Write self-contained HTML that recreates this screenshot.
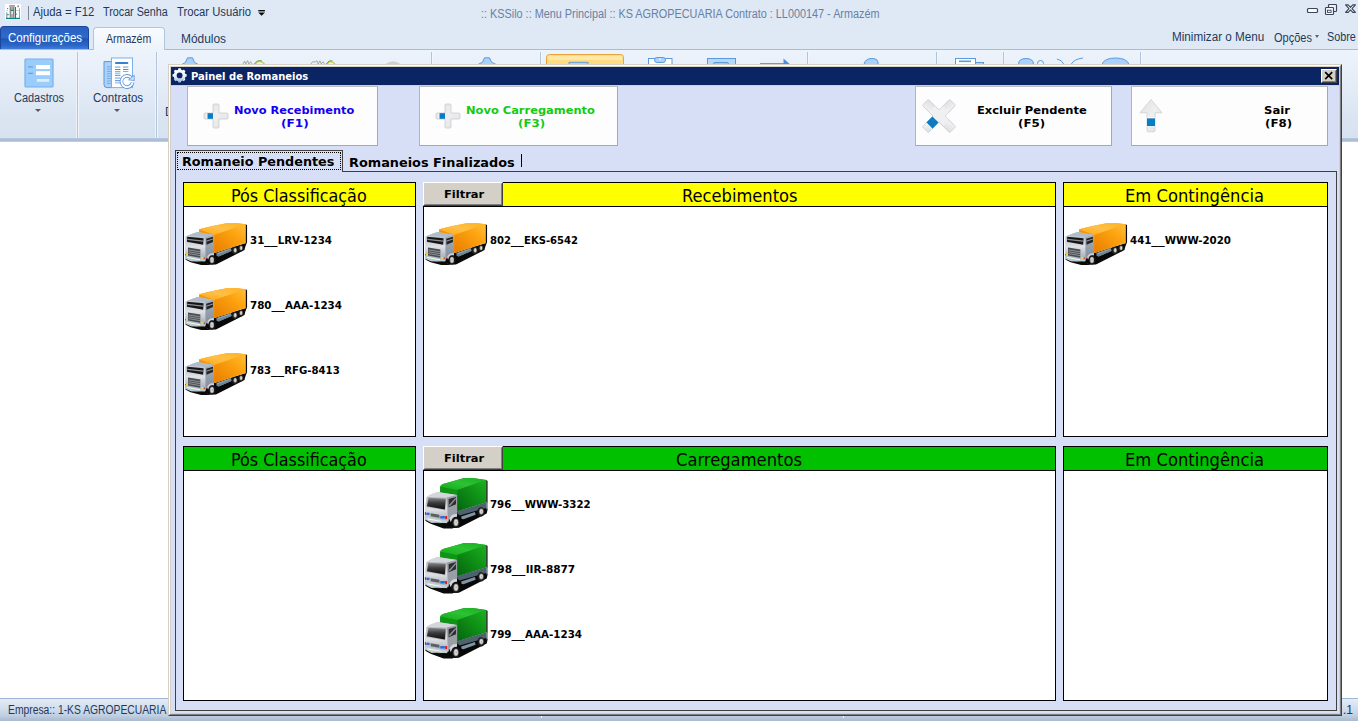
<!DOCTYPE html>
<html lang="pt-BR">
<head>
<meta charset="utf-8">
<title>KSSilo - Painel de Romaneios</title>
<style>
*{box-sizing:border-box;margin:0;padding:0}
html,body{width:1358px;height:721px;overflow:hidden;background:#fff}
body{position:relative;font-family:"Liberation Sans",sans-serif;font-size:12px;color:#1e395b}
.abs{position:absolute}
.t{position:absolute;white-space:nowrap;transform-origin:0 50%;line-height:1}
/* ---------- app frame ---------- */
#titlebar{left:0;top:0;width:1358px;height:50px;background:#dfe9f5}
.seg{font-family:"Liberation Sans",sans-serif;font-size:12px;color:#1e395b}
#tabconf{left:0;top:26px;width:89px;height:24px;border-radius:4px 4px 0 0;border:1px solid #1a479c;border-bottom:none;
 background:linear-gradient(#2a5fbd 0%,#2f6acb 45%,#1f55b6 52%,#2b66c6 80%,#4684e0 100%)}
#tabarm{left:93px;top:27px;width:72px;height:23px;background:linear-gradient(#f9fbfe,#edf3fb);border:1px solid #b3c5dc;border-bottom:none;border-radius:4px 4px 0 0}
#ribbon{left:0;top:49px;width:1358px;height:89px;border-top:1px solid #a8bcd6;background:linear-gradient(#edf3fb 0%,#e6eef8 30%,#dbe5f2 75%,#d7e2f0 100%)}
#ribbon2{left:94px;top:49px;width:70px;height:1px;background:#edf3fb}
#ribbonedge{left:0;top:138px;width:1358px;height:4px;background:linear-gradient(#bccce1,#a6bad5 50%,#b7c7dd 85%,#dfe6f0)}
.rsep{top:52px;width:3px;height:86px;margin-left:-1px;border-left:1px solid #eef3fb;border-right:1px solid #f2f6fc;background:#b2c4dc}
.darr{width:0;height:0;border-left:3px solid transparent;border-right:3px solid transparent;border-top:3px solid #5a5a5a}
#status{left:0;top:698px;width:1358px;height:23px;background:linear-gradient(#e3ecf7 0%,#d3dfee 40%,#c0cfe2 75%,#a9b9cf 100%);border-top:1px solid #9fb6d6}
/* ---------- dialog ---------- */
#dlg{left:168px;top:64px;width:1174px;height:652px;background:#d7dff6;
 border:1px solid;border-color:#d4d0c8 #404040 #404040 #d4d0c8}
#dlg .in1{left:0;top:0;right:0;bottom:0;border:1px solid;border-color:#fff #808080 #808080 #fff}
#dlg .in2{left:1px;top:1px;right:1px;bottom:1px;border:1px solid #d4d0c8}
#dtitle{left:171px;top:67px;width:1168px;height:18px;background:#0a2464}
#dtline{left:171px;top:85px;width:1168px;height:1px;background:#d4d0c8}
.ver{font-family:"DejaVu Sans","Liberation Sans",sans-serif;font-weight:bold}
.tah{font-family:"DejaVu Sans Condensed","Liberation Sans",sans-serif}
#dclose{left:1321px;top:69px;width:16px;height:14px;background:#d4d0c8;border:1px solid;border-color:#fff #404040 #404040 #fff}
#dclose i{position:absolute;left:0;top:0;right:0;bottom:0;border:1px solid;border-color:#d4d0c8 #808080 #808080 #d4d0c8}
.bigbtn{top:86px;height:60px;background:#fdfdfd;border:1px solid #a8a8a8;border-top-color:#bdbdbd;border-left-color:#b4b4b4}
.btxt{font-size:11px;color:#000}
.vtab{font-size:13px;color:#000}
.hdr{height:25px;border:1px solid #000}
.htx{font-size:18px;color:#000}
.yel{background:#ffff00}.grn{background:#00c000}
.pbody{background:#fff;border:1px solid #000;height:231px}
.filt{width:80px;height:24px;background:#d4d0c8;border:1px solid;border-color:#fff #404040 #404040 #fff}
.filt i{position:absolute;left:0;top:0;right:0;bottom:0;border:1px solid;border-color:#d4d0c8 #808080 #808080 #d4d0c8}
.us{display:inline-block;transform:scaleX(1.3);margin:0 1.5px}
.item{font-weight:bold;font-size:11px;color:#000}
#tabpage{left:175px;top:171px;width:1162px;height:540px;border:1px solid #404040;border-top:none}
</style>
</head>
<body>
<!-- ================= app title bar + ribbon ================= -->
<div id="titlebar" class="abs"></div>
<div id="apptitle" class="t seg" style="left:481px;top:8px;color:#6a7fa3;transform:scaleX(0.904)">:: KSSilo :: Menu Principal :: KS AGROPECUARIA Contrato : LL000147 - Armazém</div>
<div class="abs" style="left:28px;top:6px;width:1px;height:14px;background:#7f8794"></div>
<div id="t_ajuda" class="t seg" style="left:33px;top:6px;transform:scaleX(0.942)">Ajuda = F12</div>
<div id="t_senha" class="t seg" style="left:103px;top:6px;transform:scaleX(0.897)">Trocar Senha</div>
<div id="t_usuario" class="t seg" style="left:177px;top:6px;transform:scaleX(0.938)">Trocar Usuário</div>
<div id="tabconf" class="abs"></div>
<div id="t_conf" class="t seg" style="left:7.5px;top:32px;color:#fff;transform:scaleX(0.957)">Configurações</div>
<div id="ribbon" class="abs"></div>
<div id="tabarm" class="abs"></div>
<div id="ribbon2" class="abs"></div>
<div id="t_arm" class="t seg" style="left:106px;top:33px;transform:scaleX(0.882)">Armazém</div>
<div id="t_mod" class="t seg" style="left:181px;top:33px;transform:scaleX(0.994)">Módulos</div>
<div id="t_min" class="t seg" style="left:1172.4px;top:31px;transform:scaleX(0.975)">Minimizar o Menu</div>
<div id="t_opc" class="t seg" style="left:1273.7px;top:32px;transform:scaleX(0.916)">Opções</div>
<div class="abs darr" style="left:1315px;top:35px;border-left-width:2.5px;border-right-width:2.5px;border-top-color:#586479"></div>
<div id="t_sobre" class="t seg" style="left:1326.6px;top:31px;transform:scaleX(0.899)">Sobre</div>
<div id="ribbonedge" class="abs"></div>
<div class="abs rsep" style="left:77px"></div>
<div class="abs rsep" style="left:156px"></div>
<div class="abs rsep" style="left:431px"></div>
<div class="abs rsep" style="left:540px"></div>
<div class="abs rsep" style="left:807px"></div>
<div class="abs rsep" style="left:936px"></div>
<div class="abs rsep" style="left:1003px"></div>
<div class="abs rsep" style="left:1140px"></div>
<div id="t_cad" class="t seg" style="left:13.5px;top:92px;transform:scaleX(0.914)">Cadastros</div>
<div class="abs darr" style="left:35px;top:109px"></div>
<div id="t_con" class="t seg" style="left:92.5px;top:92px;transform:scaleX(0.963)">Contratos</div>
<div class="abs darr" style="left:114px;top:109px"></div>
<div class="abs seg" style="left:165px;top:106px;width:4px;height:12px;overflow:hidden;line-height:12px">D</div>
<!--RIBBONICONS-->
<!-- app icon -->
<svg class="abs" style="left:5px;top:4px" width="16" height="16" viewBox="0 0 16 16">
 <rect width="16" height="16" fill="#fff"/>
 <rect x="4.4" y="2" width="5.4" height="12.2" fill="#b9b6b6"/><rect x="4.2" y="1.2" width="5.8" height="1" fill="#8a8a8a"/>
 <rect x="5.3" y="3" width="0.9" height="10" fill="#7a7a7a"/><rect x="7.9" y="3" width="0.9" height="10" fill="#7a7a7a"/>
 <rect x="6.5" y="7" width="1.2" height="3.2" fill="#fff"/>
 <rect x="5.9" y="5.8" width="2.8" height="1.1" fill="#00857f"/>
 <rect x="10" y="3" width="1" height="11" fill="#00857f"/><rect x="11" y="9.6" width="0.9" height="1" fill="#00857f"/>
 <rect x="1.4" y="8.4" width="0.9" height="5.8" fill="#777"/><rect x="2.2" y="10.2" width="1.6" height="1" fill="#00857f"/>
 <rect x="2" y="4.2" width="1.2" height="0.9" fill="#00857f"/><rect x="1.6" y="6" width="0.8" height="0.8" fill="#777"/>
 <rect x="12.4" y="1.4" width="1.6" height="1.8" fill="#8a8a8a"/><rect x="14" y="4.2" width="0.9" height="10" fill="#999"/>
 <rect x="11.2" y="6.2" width="3.4" height="0.7" fill="#bbb"/>
 <rect x="1" y="13.8" width="14" height="1.3" fill="#00857f"/>
</svg>
<!-- QAT dropdown -->
<svg class="abs" style="left:257px;top:9px" width="10" height="8" viewBox="0 0 10 8"><rect x="1.3" y="1" width="6.6" height="1.4" fill="#0c0c0c"/><path d="M1.2,3.5 h6.8 l-3.4,3.3 z" fill="#0c0c0c"/></svg>
<!-- window controls -->
<svg class="abs" style="left:1305px;top:2px" width="53" height="16" viewBox="0 0 53 16" fill="none" stroke="#3b4458" stroke-width="1.15">
 <rect x="2.5" y="6.5" width="10" height="4" rx="1" stroke-width="1.2" fill="#f8fafd"/>
 <rect x="23.5" y="2.5" width="8" height="7" rx="0.8" fill="#eef3fa"/><rect x="20.5" y="5.5" width="8" height="7" rx="0.8" fill="#f8fafd"/><rect x="22.5" y="8.2" width="3.6" height="2.2" stroke-width="0.9"/>
 <path d="M40.6,2.9 h2.6 l2.3,2.4 l2.3,-2.4 h2.6 l-3.4,3.7 l3.4,3.7 h-2.6 l-2.3,-2.4 l-2.3,2.4 h-2.6 l3.4,-3.7 z" fill="#f8fafd" stroke-linejoin="round"/>
</svg>
<!-- Cadastros -->
<svg class="abs" style="left:24px;top:58px" width="30" height="30" viewBox="0 0 30 30">
 <rect x="1" y="1" width="28" height="28" rx="1" fill="#9accfc" stroke="#78b0e8" stroke-width="1.2"/>
 <rect x="12" y="7" width="14" height="4" fill="#fff"/><rect x="12" y="13.2" width="14" height="4" fill="#fff"/>
 <rect x="12.8" y="21" width="12.4" height="2.8" fill="#dceeff"/>
 <rect x="4" y="8" width="5" height="1.8" fill="#7aaee2"/><rect x="4" y="14.8" width="5" height="1" fill="#5c98d8"/>
</svg>
<!-- Contratos -->
<svg class="abs" style="left:103px;top:57px" width="32" height="32" viewBox="0 0 32 32">
 <path d="M1,4.6 h8 v26 h-5 a3,3 0 0 1 -3,-3 z" fill="#aad2fb" stroke="#5c98d8" stroke-width="1"/>
 <g stroke="#5c98d8" stroke-width="0.9"><path d="M4,9.8 h4.5 M4,12 h4.5 M4,14.4 h4.5 M4,16.8 h4.5 M4,19.2 h4.5 M4,21.6 h4.5 M4,24 h4.5 M4,26.4 h4.5" opacity="0.75"/></g>
 <rect x="8.5" y="1" width="21" height="29.6" fill="#fff" stroke="#7ab0e8" stroke-width="1"/>
 <rect x="12" y="5" width="13.4" height="2.1" rx="1" fill="#3a7fd0"/>
 <g fill="#a9c8ee"><rect x="12" y="9.2" width="5.4" height="1.8"/><rect x="20" y="9.2" width="5.4" height="1.8"/><rect x="12" y="15.5" width="5.4" height="1.5"/><rect x="12" y="20.2" width="5.4" height="1.8"/></g>
 <g fill="#4b8ad6"><rect x="12" y="12" width="5.4" height="1"/><rect x="20" y="12" width="5.4" height="1"/><rect x="12" y="17.8" width="5.4" height="1"/><rect x="12" y="23.2" width="5.4" height="1"/></g>
 <g fill="#7fb0e6"><rect x="12" y="14" width="5.4" height="1"/><rect x="20" y="14" width="5.4" height="1"/><rect x="12" y="25.4" width="5.4" height="1"/></g>
 <circle cx="24" cy="24.6" r="6.6" fill="#fff"/>
 <path d="M28.6,21.2 A5.6,5.6 0 1 0 29.6,25.4" fill="none" stroke="#5b97dc" stroke-width="3.6"/>
 <path d="M28.6,21.2 A5.6,5.6 0 1 0 29.6,25.4" fill="none" stroke="#fff" stroke-width="1.9"/>
 <path d="M25.6,22.8 l5.6,-4.6 v5.4 z" fill="#cfe4fb" stroke="#5b97dc" stroke-width="0.8"/>
</svg>
<!-- slivers of ribbon buttons peeking above the dialog -->
<svg class="abs" style="left:168px;top:50px" width="1174" height="14" viewBox="168 50 1174 14">
 <g fill="#a9d1fb" stroke="#5c9ade" stroke-width="1">
  <path d="M181,65 l4.5,-2.6 l2,-4.6 h5 l2,4.6 l4.5,2.6 z"/>
  <path d="M477,65 l5.5,-2.8 l2,-4.4 h5 l2,4.4 l5.5,2.8 z"/>
  <rect x="648.5" y="58.5" width="23.5" height="8" fill="#fff"/><rect x="654.5" y="57.5" width="11" height="5" rx="2.4"/><circle cx="660" cy="59.3" r="0.9" fill="#fff" stroke="none"/>
  <rect x="707.5" y="58.5" width="28" height="8" fill="#b5d8fb"/><rect x="713.5" y="62.5" width="15" height="4" rx="1.5" fill="#9cc6f3"/>
  <path d="M760,63.7 h27" fill="none" stroke-width="1.3"/><path d="M783.5,58.5 l6.5,5.8 h-6.5 z" fill="#4d8fdc" stroke="none"/>
  <path d="M864,64.5 q1,-6 8,-6 q7,0 6,6 z"/>
  <rect x="955.5" y="58.5" width="20" height="8" fill="#fff"/><rect x="959" y="60.5" width="12" height="1.6" fill="#5c9ade" stroke="none"/><rect x="975.5" y="62.5" width="8" height="5"/>
  <path d="M1018.5,64.5 q0,-6 7.5,-6 q7.5,0 7.5,6 z"/><circle cx="1040.5" cy="63.5" r="3" fill="#eaf3fd"/>
  <path d="M1057,59 q5,1 7,5.5" fill="none"/><path d="M1071,64.5 q3,-5.5 12,-6.5" fill="none"/>
  <path d="M1102,64.5 q2,-6.5 13.5,-6.5 q11.5,0 13.5,6.5 z"/>
 </g>
 <g fill="none" stroke="#8f9a8f" stroke-width="0.8"><path d="M243,64 l1.6,-3 l1.2,3 l1.8,-3.4 l1.2,3.4 l1.8,-2.4 l1.5,2.4"/><path d="M311,64 l1.5,-2.2 h3 l1.5,-1 l1.2,3.2 l1.8,-3.2 l1.2,3.2 l1.8,-2.2 l1.5,2.2"/></g>
 <path d="M255,64.5 q4,-6 9.5,-0.5" fill="none" stroke="#d0c630" stroke-width="1.3"/><path d="M254,64.5 q3.4,-5.4 8,-3.4" fill="none" stroke="#58a858" stroke-width="1"/>
 <path d="M327,64.5 q3,-5.5 8,-0.5" fill="none" stroke="#d0c630" stroke-width="1.3"/><path d="M326,64.5 q3,-5 6.6,-3.4" fill="none" stroke="#58a858" stroke-width="1"/>
 <path d="M385,64.5 q8,-6.4 16,0 z" fill="#cfcfcf"/>
 <rect x="546.5" y="54.5" width="77" height="14" rx="3" fill="#ffdc82" stroke="#e8a33a"/>
 <rect x="548" y="56" width="74" height="4" fill="#ffeab0" opacity="0.8"/>
 <path d="M569,64.5 v-2.2 h19 v2.2" fill="#a9d1fb" stroke="#5c9ade"/>
</svg>
<!--/RIBBONICONS-->
<div id="status" class="abs"></div>
<div class="abs" style="left:541px;top:716px;width:1px;height:2px;background:#f4f7fb"></div><div class="abs" style="left:843px;top:716px;width:1px;height:2px;background:#f4f7fb"></div>
<div id="t_emp" class="t seg" style="left:8px;top:704px;transform:scaleX(0.860)">Empresa:: 1-KS AGROPECUARIA</div>
<div id="t_dot1" class="t seg" style="left:1343px;top:704px">.1</div>

<!-- ================= dialog ================= -->
<div id="dlg" class="abs"><div class="abs in1"></div><div class="abs in2"></div></div>
<div id="dtitle" class="abs"></div>
<div id="dtline" class="abs"></div>
<div id="t_dlg" class="t tah" style="left:191px;top:71px;font-weight:bold;font-size:11px;color:#fff;transform:scaleX(1.010)">Painel de Romaneios</div>
<div id="dclose" class="abs"><i></i></div>

<div class="abs bigbtn" style="left:187px;width:191px"></div>
<div class="abs bigbtn" style="left:419px;width:199px"></div>
<div class="abs bigbtn" style="left:915px;width:197px"></div>
<div class="abs bigbtn" style="left:1131px;width:197px"></div>
<div id="b1a" class="t ver btxt" style="left:233.7px;top:105px;color:#1400f0;transform:scaleX(1.033)">Novo Recebimento</div>
<div id="b1b" class="t ver btxt" style="left:281.1px;top:118px;color:#1400f0;transform:scaleX(1.102)">(F1)</div>
<div id="b2a" class="t ver btxt" style="left:465.6px;top:105px;color:#12cc12;transform:scaleX(1.040)">Novo Carregamento</div>
<div id="b2b" class="t ver btxt" style="left:518.4px;top:118px;color:#12cc12;transform:scaleX(1.074)">(F3)</div>
<div id="b3a" class="t ver btxt" style="left:976.5px;top:105px;transform:scaleX(1.045)">Excluir Pendente</div>
<div id="b3b" class="t ver btxt" style="left:1017.6px;top:118px;transform:scaleX(1.074)">(F5)</div>
<div id="b4a" class="t ver btxt" style="left:1264px;top:105px;transform:scaleX(1.059)">Sair</div>
<div id="b4b" class="t ver btxt" style="left:1265.3px;top:118px;transform:scaleX(1.074)">(F8)</div>

<!--DLGICONS-->
<svg class="abs" style="left:172px;top:67px" width="16" height="17" viewBox="0 0 16 17">
 <defs><linearGradient id="gGear" x1="0" y1="0" x2="0" y2="1"><stop offset="0" stop-color="#ffffff"/><stop offset="0.6" stop-color="#e9f0fa"/><stop offset="1" stop-color="#9fbbe0"/></linearGradient></defs>
 <g transform="translate(7.6,8.4)" fill="url(#gGear)">
  <g id="gteeth"><rect x="-1.5" y="-7.1" width="3" height="14.2" rx="0.9"/><rect x="-7.1" y="-1.5" width="14.2" height="3" rx="0.9"/></g>
  <use href="#gteeth" transform="rotate(45)"/>
 </g>
 <circle cx="7.6" cy="8.4" r="6" fill="url(#gGear)"/>
 <circle cx="7.6" cy="8.4" r="2.9" fill="#0a2464"/>
</svg>
<svg class="abs" style="left:1321px;top:69px" width="16" height="14" viewBox="0 0 16 14"><path d="M4.2,3.2 L11.2,10.2 M11.2,3.2 L4.2,10.2" stroke="#000" stroke-width="1.7" fill="none"/></svg>
<svg width="0" height="0" style="position:absolute"><defs>
 <linearGradient id="gIc" x1="0" y1="0" x2="1" y2="1"><stop offset="0" stop-color="#dfe0e2"/><stop offset="0.5" stop-color="#efeff1"/><stop offset="1" stop-color="#dedfe1"/></linearGradient>
 <symbol id="icPlus" viewBox="0 0 26 26">
  <path d="M11,1 h4 a1,1 0 0 1 1,1 v8 h8 a1,1 0 0 1 1,1 v4 a1,1 0 0 1 -1,1 h-8 v8 a1,1 0 0 1 -1,1 h-4 a1,1 0 0 1 -1,-1 v-8 h-8 a1,1 0 0 1 -1,-1 v-4 a1,1 0 0 1 1,-1 h8 v-8 a1,1 0 0 1 1,-1 z" fill="url(#gIc)" stroke="#cbccce" stroke-width="0.8"/>
  <rect x="4.3" y="10.2" width="5.7" height="5.6" fill="#0a7cc4"/>
  <rect x="3.5" y="10.2" width="0.8" height="5.6" fill="#fff"/>
 </symbol>
</defs></svg>
<svg class="abs" style="left:203px;top:103px" width="26" height="26"><use href="#icPlus"/></svg>
<svg class="abs" style="left:435px;top:103px" width="26" height="26"><use href="#icPlus"/></svg>
<svg class="abs" style="left:921px;top:98px" width="36" height="36" viewBox="0 0 36 36">
 <g transform="translate(18,18) rotate(45)">
  <rect x="-19.4" y="-4.3" width="38.8" height="8.6" rx="1.6" fill="url(#gIc)" stroke="#cdced0" stroke-width="0.8"/>
  <rect x="-4.3" y="-19.4" width="8.6" height="38.8" rx="1.6" fill="url(#gIc)" stroke="#cdced0" stroke-width="0.8"/>
  <rect x="-3.9" y="-10" width="7.8" height="20" fill="#eff0f1"/>
  <rect x="-10" y="-3.9" width="20" height="7.8" fill="#eff0f1"/>
  <rect x="-4.3" y="5" width="8.6" height="8.6" fill="#0a7cc4"/>
  <rect x="-4.3" y="13.6" width="8.6" height="0.8" fill="#fff"/>
 </g>
</svg>
<svg class="abs" style="left:1138px;top:98px" width="26" height="36" viewBox="0 0 26 36">
 <path d="M13,1.6 L24,14.8 L17,14.8 L17,32.6 a1.2,1.2 0 0 1 -1.2,1.2 h-5.6 a1.2,1.2 0 0 1 -1.2,-1.2 L9,14.8 L2,14.8 Z" fill="url(#gIc)" stroke="#cdced0" stroke-width="0.8" stroke-linejoin="round"/>
 <rect x="9" y="20.2" width="8" height="8.1" fill="#0a7cc4"/>
 <rect x="9" y="19.4" width="8" height="0.8" fill="#fff"/><rect x="9" y="28.3" width="8" height="0.8" fill="#fff"/>
</svg>
<!--/DLGICONS-->
<!-- tabs -->
<div id="tabpage" class="abs"></div>
<div class="abs" style="left:343px;top:171px;width:994px;height:1px;background:#404040"></div>
<div class="abs" style="left:175px;top:150px;width:168px;height:22px;border:1px solid #404040;border-bottom:none;background:#d7dff6"></div>
<div class="abs" style="left:177px;top:152px;width:164px;height:18px;border:1px dotted #000"></div>
<div id="tab1" class="t ver vtab" style="left:182px;top:155px;transform:scaleX(0.983)">Romaneio Pendentes</div>
<div id="tab2" class="t ver vtab" style="left:349px;top:156px;transform:scaleX(0.989)">Romaneios Finalizados</div>
<div class="abs" style="left:521px;top:154px;width:1px;height:13px;background:#000"></div>

<!-- top row -->
<div class="abs hdr yel" style="left:183px;top:182px;width:233px"></div>
<div class="abs pbody" style="left:183px;top:206px;width:233px"></div>
<div class="abs hdr yel" style="left:423px;top:182px;width:633px"></div>
<div class="abs pbody" style="left:423px;top:206px;width:633px"></div>
<div class="abs hdr yel" style="left:1063px;top:182px;width:265px"></div>
<div class="abs pbody" style="left:1063px;top:206px;width:265px"></div>
<div class="abs filt" style="left:423px;top:182px"><i></i></div>
<div id="f1" class="t ver" style="left:443.7px;top:189px;font-size:11px;color:#000;transform:scaleX(1.044)">Filtrar</div>
<div id="h1" class="t tah htx" style="left:231.2px;top:187px;transform:scaleX(0.987)">Pós Classificação</div>
<div id="h2" class="t tah htx" style="left:681.6px;top:187px;transform:scaleX(1.007)">Recebimentos</div>
<div id="h3" class="t tah htx" style="left:1125.4px;top:187px;transform:scaleX(1.010)">Em Contingência</div>

<!-- bottom row -->
<div class="abs hdr grn" style="left:183px;top:446px;width:233px"></div>
<div class="abs pbody" style="left:183px;top:470px;width:233px"></div>
<div class="abs hdr grn" style="left:423px;top:446px;width:633px"></div>
<div class="abs pbody" style="left:423px;top:470px;width:633px"></div>
<div class="abs hdr grn" style="left:1063px;top:446px;width:265px"></div>
<div class="abs pbody" style="left:1063px;top:470px;width:265px"></div>
<div class="abs filt" style="left:423px;top:446px"><i></i></div>
<div id="f2" class="t ver" style="left:443.7px;top:453px;font-size:11px;color:#000;transform:scaleX(1.044)">Filtrar</div>
<div id="h4" class="t tah htx" style="left:231.2px;top:451px;transform:scaleX(0.987)">Pós Classificação</div>
<div id="h5" class="t tah htx" style="left:675.9px;top:451px;transform:scaleX(1.010)">Carregamentos</div>
<div id="h6" class="t tah htx" style="left:1125.4px;top:451px;transform:scaleX(1.010)">Em Contingência</div>

<!-- list items -->
<div id="i1" class="t tah item" style="left:250px;top:235px;transform:scaleX(1.036)">31<span class="us">__</span>LRV-1234</div>
<div id="i2" class="t tah item" style="left:250px;top:300px;transform:scaleX(1.042)">780<span class="us">__</span>AAA-1234</div>
<div id="i3" class="t tah item" style="left:250px;top:365px;transform:scaleX(1.022)">783<span class="us">__</span>RFG-8413</div>
<div id="i4" class="t tah item" style="left:490px;top:235px;transform:scaleX(1.014)">802<span class="us">__</span>EKS-6542</div>
<div id="i5" class="t tah item" style="left:1130px;top:235px;transform:scaleX(1.036)">441<span class="us">__</span>WWW-2020</div>
<div id="i6" class="t tah item" style="left:490px;top:499px;transform:scaleX(1.033)">796<span class="us">__</span>WWW-3322</div>
<div id="i7" class="t tah item" style="left:490px;top:564px;transform:scaleX(1.062)">798<span class="us">__</span>IIR-8877</div>
<div id="i8" class="t tah item" style="left:490px;top:629px;transform:scaleX(1.043)">799<span class="us">__</span>AAA-1234</div>
<!--TRUCKS-->
<svg width="0" height="0" style="position:absolute">
 <defs>
  <linearGradient id="gOS" x1="0.95" y1="0.05" x2="0.1" y2="0.95">
   <stop offset="0" stop-color="#ffbc34"/><stop offset="0.35" stop-color="#fda310"/><stop offset="1" stop-color="#ea8000"/>
  </linearGradient>
  <linearGradient id="gOT" x1="0" y1="1" x2="1" y2="0">
   <stop offset="0" stop-color="#ffa50f"/><stop offset="0.5" stop-color="#ffc048"/><stop offset="1" stop-color="#ffb21f"/>
  </linearGradient>
  <linearGradient id="gCF" x1="0" y1="0" x2="0" y2="1">
   <stop offset="0" stop-color="#b2bcc8"/><stop offset="0.42" stop-color="#dfe2e6"/><stop offset="1" stop-color="#98a3af"/>
  </linearGradient>
  <linearGradient id="gCS" x1="0" y1="0" x2="0" y2="1">
   <stop offset="0" stop-color="#a3afbc"/><stop offset="1" stop-color="#808c9a"/>
  </linearGradient>
  <linearGradient id="gGS" x1="0.95" y1="0.05" x2="0.1" y2="0.95">
   <stop offset="0" stop-color="#1bac22"/><stop offset="0.4" stop-color="#109416"/><stop offset="1" stop-color="#066a10"/>
  </linearGradient>
  <linearGradient id="gGT" x1="0" y1="1" x2="1" y2="0">
   <stop offset="0" stop-color="#14a81a"/><stop offset="0.5" stop-color="#2cc234"/><stop offset="1" stop-color="#1aae20"/>
  </linearGradient>
  <linearGradient id="gWS" x1="0" y1="0" x2="0" y2="1">
   <stop offset="0" stop-color="#8a8a8c"/><stop offset="0.45" stop-color="#3a3a3c"/><stop offset="1" stop-color="#0c0c0c"/>
  </linearGradient>
  <linearGradient id="gGF" x1="0" y1="0" x2="0" y2="1">
   <stop offset="0" stop-color="#bcc0c6"/><stop offset="0.5" stop-color="#dfe0e3"/><stop offset="1" stop-color="#a4a8ae"/>
  </linearGradient>
  <!-- orange truck, traced at 14.72x : viewBox 1001x721 == 68x49 px -->
  <symbol id="trkO" viewBox="0 0 1001 721">
   <polygon points="110,598 330,640 395,672 485,668 905,458 918,405 940,350 460,500 330,560" fill="#080808"/>
   <polygon points="238,150 400,112 640,62 800,62 925,76 925,348 460,502 238,420" fill="#fba514"/>
   <polygon points="238,150 460,232 460,500 238,420" fill="#f29708"/>
   <polygon points="238,150 400,112 640,62 800,62 925,76 460,236" fill="url(#gOT)"/>
   <polygon points="460,236 925,76 925,348 460,502" fill="url(#gOS)"/>
   <polygon points="925,76 943,92 943,352 925,348" fill="#0c0c0c"/>
   <!-- tank -->
   <polygon points="492,500 706,428 714,470 524,552 497,540" fill="#8aa0af"/><polygon points="496,522 710,448 714,470 524,552 497,540" fill="#6d8494"/>
   <!-- rear wheels -->
   <ellipse cx="764" cy="463" rx="44" ry="54" fill="#1c1c1c"/>
   <ellipse cx="768" cy="459" rx="25" ry="37" fill="#8e8e8e"/>
   <ellipse cx="769" cy="458" rx="16" ry="27" fill="#d9d4c6"/>
   <ellipse cx="851" cy="431" rx="40" ry="48" fill="#1c1c1c"/>
   <ellipse cx="855" cy="427" rx="23" ry="33" fill="#8e8e8e"/>
   <ellipse cx="856" cy="426" rx="15" ry="24" fill="#d9d4c6"/>
   <!-- cab -->
   <polygon points="40,256 58,250 150,212 215,192 456,236 456,505 400,512 352,560 330,614 34,578" fill="#b4bcc7"/>
   <polygon points="58,250 150,212 215,192 455,236 330,272" fill="#b2bcc9"/><polygon points="48,252 330,266 330,282 46,266" fill="#d9dee4"/>
   <polygon points="326,268 456,236 456,505 400,512 352,560 330,612" fill="url(#gCS)"/>
   <polygon points="40,256 328,268 328,614 34,578" fill="url(#gCF)"/>
   <polygon points="62,260 302,284 297,380 58,334" fill="#161616"/>
   <polygon points="64,292 299,316 298,334 62,308" fill="#8c8f93"/>
   <polygon points="342,292 442,262 442,340 346,380" fill="#222426"/>
   <polygon points="345,318 442,288 442,302 345,334" fill="#8e9196"/>
   <!-- grille -->
   <polygon points="74,420 256,450 252,572 74,538" fill="#4a4d51"/>
   <g stroke="#c4c6c9" stroke-width="8"><line x1="80" y1="455" x2="250" y2="482"/><line x1="80" y1="482" x2="250" y2="510"/><line x1="80" y1="509" x2="249" y2="538"/></g>
   <!-- bumper -->
   <polygon points="30,540 326,596 326,628 120,618 30,580" fill="#b5c8cd"/>
   <polygon points="60,560 250,594 250,606 60,574" fill="#f4f6f6"/>
   <polygon points="34,584 120,622 326,628 400,676 268,678 112,636 40,600" fill="#0a0a0a"/>
   <!-- lamps -->
   <rect x="44" y="514" width="28" height="22" fill="#ffd83a"/><rect x="30" y="516" width="13" height="18" fill="#d82020"/>
   <rect x="268" y="560" width="36" height="26" fill="#ffd83a"/><rect x="305" y="566" width="16" height="24" fill="#e02020"/>
   <!-- fender + front wheel -->
   <path d="M352,560 Q380,498 456,505 L456,540 Q400,530 370,600 Z" fill="#cdd2d8"/>
   <ellipse cx="428" cy="600" rx="52" ry="68" fill="#161616"/>
   <ellipse cx="426" cy="604" rx="31" ry="48" fill="#9b9b9b"/>
   <ellipse cx="427" cy="603" rx="21" ry="36" fill="#d8d8d8"/>
   <ellipse cx="428" cy="603" rx="8" ry="14" fill="#a8a8a8"/>
  </symbol>
  <!-- green truck, traced at 13.1x : viewBox 891x721 == 68x55 px -->
  <symbol id="trkG" viewBox="0 0 891 721">
   <polygon points="95,610 320,655 380,695 470,690 835,505 850,440 850,360 450,480 330,580" fill="#080808"/>
   <polygon points="225,150 262,118 540,40 650,40 830,65 830,358 450,476 225,420" fill="#16a01c"/>
   <polygon points="225,150 450,195 450,480 225,420" fill="#0f9416"/>
   <path d="M225,150 Q228,128 262,118 L540,40 L650,40 L830,65 L450,196 Z" fill="url(#gGT)"/>
   <polygon points="450,196 830,65 830,358 450,474" fill="url(#gGS)"/>
   <polygon points="830,65 846,78 846,362 830,358" fill="#0a0a0a"/>
   <!-- bed -->
   <polygon points="450,474 830,358 850,362 850,425 480,532 450,505" fill="#4e626e"/>
   <polygon points="832,360 852,364 852,445 832,452" fill="#9aa2ab"/>
   <!-- tank -->
   <polygon points="500,545 680,485 690,520 530,580 505,575" fill="#7d94a4"/>
   <!-- rear wheel -->
   <ellipse cx="760" cy="484" rx="48" ry="60" fill="#1a1a1a"/>
   <ellipse cx="764" cy="480" rx="29" ry="40" fill="#8e8e8e"/>
   <ellipse cx="765" cy="479" rx="20" ry="30" fill="#dcdcdc"/>
   <ellipse cx="766" cy="479" rx="7" ry="11" fill="#a8a8a8"/>
   <!-- cab -->
   <polygon points="48,290 88,262 190,224 446,262 446,512 395,520 345,575 330,615 28,566 34,380" fill="#bfc2c7"/>
   <polygon points="88,262 190,224 444,263 316,296 48,291" fill="#d3d6da"/>
   <polygon points="314,296 446,262 446,512 395,520 345,575 330,615" fill="#9a9fa7"/>
   <polygon points="48,290 314,298 314,612 28,566 34,380" fill="url(#gGF)"/>
   <polygon points="60,290 308,304 296,464 40,418" fill="#b9bcc1"/><polygon points="72,298 298,312 286,452 52,410" fill="url(#gWS)"/>
   <polygon points="336,316 432,288 432,384 336,424" fill="#2c2d2f"/>
   <polygon points="340,392 428,296 432,318 350,412" fill="#8d9096"/>
   <!-- grille / lamps -->
   <polygon points="100,500 215,520 215,560 100,540" fill="#5c5f63"/>
   <rect x="24" y="488" width="16" height="34" fill="#e01818"/><rect x="44" y="494" width="42" height="30" fill="#2a6ae0"/>
   <rect x="226" y="538" width="60" height="32" fill="#2a6ae0"/><rect x="290" y="538" width="26" height="38" fill="#ee1515"/>
   <!-- bumper -->
   <polygon points="20,540 318,596 318,634 110,622 20,580" fill="#c3d0d3"/>
   <polygon points="60,568 240,602 240,614 60,584" fill="#f6f7f7"/>
   <polygon points="26,584 110,626 318,636 395,700 270,700 100,640 34,604" fill="#0a0a0a"/>
   <!-- fender + wheel -->
   <path d="M345,575 Q372,505 446,512 L446,548 Q392,540 364,618 Z" fill="#d2d5d9"/>
   <ellipse cx="428" cy="622" rx="54" ry="72" fill="#161616"/>
   <ellipse cx="432" cy="622" rx="33" ry="50" fill="#959595"/>
   <ellipse cx="433" cy="621" rx="23" ry="38" fill="#dcdcdc"/>
   <ellipse cx="434" cy="621" rx="8" ry="14" fill="#a8a8a8"/>
  </symbol>
 </defs>
</svg>
<svg class="abs" style="left:183px;top:219px" width="68" height="49"><use href="#trkO"/></svg>
<svg class="abs" style="left:183px;top:284px" width="68" height="49"><use href="#trkO"/></svg>
<svg class="abs" style="left:183px;top:349px" width="68" height="49"><use href="#trkO"/></svg>
<svg class="abs" style="left:423px;top:219px" width="68" height="49"><use href="#trkO"/></svg>
<svg class="abs" style="left:1063px;top:219px" width="68" height="49"><use href="#trkO"/></svg>
<svg class="abs" style="left:423px;top:475px" width="68" height="55"><use href="#trkG"/></svg>
<svg class="abs" style="left:423px;top:540px" width="68" height="55"><use href="#trkG"/></svg>
<svg class="abs" style="left:423px;top:605px" width="68" height="55"><use href="#trkG"/></svg>
<!--/TRUCKS-->
</body>
</html>
